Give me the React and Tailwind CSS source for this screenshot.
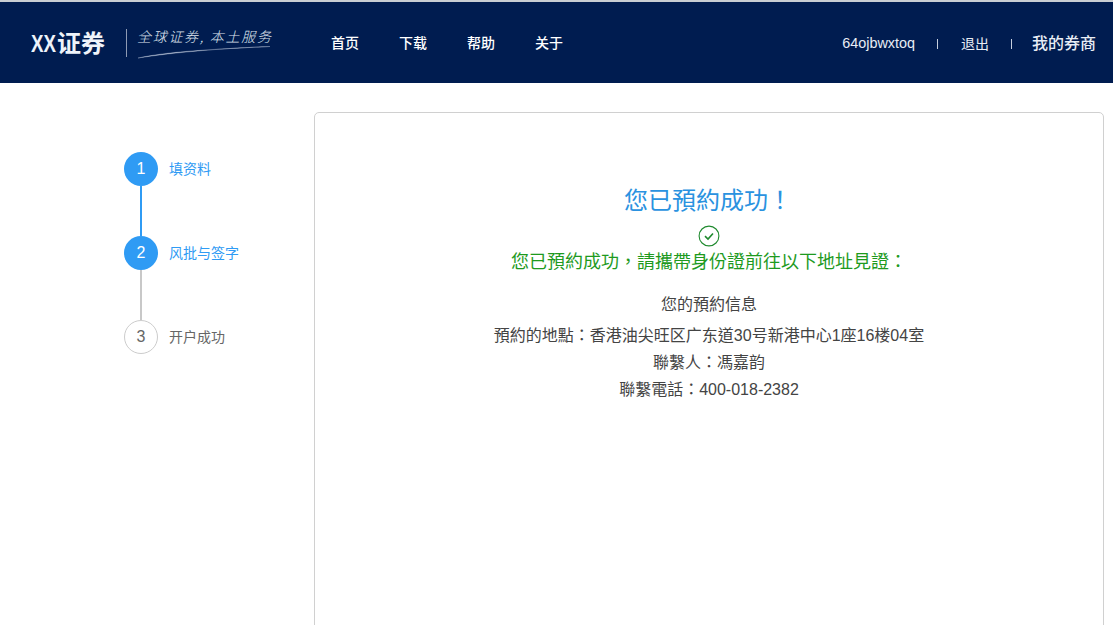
const font = { fontFamily: '"Liberation Sans", "Noto Sans CJK SC", sans-serif' };
const tcFont = { fontFamily: '"Liberation Sans", "Noto Sans CJK TC", sans-serif' };

const navItems = ["首页", "下载", "帮助", "关于"];

const Step = ({ num, label, active, line }) => (
  <div className="flex flex-col">
    <div className="flex items-center h-[34px]">
      <div
        className={
          active
            ? "w-[34px] h-[34px] rounded-full bg-[#2f9bf4] text-white flex items-center justify-center text-base"
            : "w-[34px] h-[34px] rounded-full border border-[#cccccc] bg-white text-[#666666] flex items-center justify-center text-base"
        }
      >
        {num}
      </div>
      <span className={active ? "ml-[11px] text-sm text-[#2f9bf4]" : "ml-[11px] text-sm text-[#666666]"}>
        {label}
      </span>
    </div>
    {line && <div className={line === "blue" ? "w-[2px] h-[50px] ml-[16px] bg-[#2f9bf4]" : "w-[2px] h-[50px] ml-[16px] bg-[#c8c8c8]"} />}
  </div>
);

export default function App() {
  return (
    <div className="w-[1113px] h-[625px] overflow-hidden bg-white" style={font}>
      <header className="h-[83px] bg-[#001c50] border-t-2 border-[#c9cdd3] flex items-center text-white">
        <div className="flex items-center ml-[31px] w-[300px] shrink-0">
          <span className="flex items-center w-[76px] mt-[2px] whitespace-nowrap font-bold leading-none text-[24px] text-[#eef3fa]">
            <span className="inline-block w-[27px] origin-left scale-x-[0.78]">XX</span>
            <span className="-ml-[1px]">证券</span>
          </span>
          <div className="w-px h-[28px] bg-[#8e9ab3] ml-[19px]" />
          <div className="relative ml-[10px] h-[36px] w-[136px]">
            <span
              className="absolute left-0 top-[1px] text-[14px] italic tracking-[1.7px] whitespace-nowrap text-[#dfe5ef]"
              style={{ fontFamily: '"Noto Sans CJK SC", serif', fontWeight: 300 }}
            >
              全球证券, 本土服务
            </span>
            <svg className="absolute left-0 top-[20px]" width="136" height="16" viewBox="0 0 136 16" fill="none">
              <path d="M1 13C30 7 60 5 133 1.5C90 3 40 7 1 13Z" fill="#c9d3e4" stroke="#c9d3e4" strokeWidth="0.3" />
            </svg>
          </div>
        </div>
        <nav className="flex items-center gap-[40px] text-sm font-medium">
          {navItems.map((item) => (
            <span key={item} className="w-[28px] whitespace-nowrap">{item}</span>
          ))}
        </nav>
        <div className="ml-auto mr-[17px] mt-[2px] flex items-center text-[#e8edf5]">
          <span className="text-[14.4px]">64ojbwxtoq</span>
          <div className="w-px h-[10px] bg-[#c6cede] ml-[22px] mr-[23px]" />
          <span className="text-sm">退出</span>
          <div className="w-px h-[10px] bg-[#c6cede] ml-[22px] mr-[20px]" />
          <span className="text-base font-medium">我的券商</span>
        </div>
      </header>

      <main className="flex">
        <aside className="w-[314px] shrink-0 pl-[124px] pt-[69px]">
          <Step num="1" label="填资料" active line="blue" />
          <Step num="2" label="风批与签字" active line="gray" />
          <Step num="3" label="开户成功" />
        </aside>
        <section className="mt-[29px] w-[790px] h-[600px] border border-[#d0d0d0] rounded-[5px] flex flex-col items-center pt-[72px] text-[#444444]" style={tcFont}>
          <h1 className="text-2xl leading-[32px] text-[#2a92e0] ml-[-2px]">您已預約成功！</h1>
          <svg className="mt-[8px] text-[#1f8a2e]" width="22" height="22" viewBox="0 0 22 22" fill="none" stroke="currentColor">
            <circle cx="11" cy="11" r="9.9" strokeWidth="1.1" />
            <path d="M7 11.2L10 14L15 8.5" strokeWidth="1.6" />
          </svg>
          <p className="text-lg leading-[24px] text-[#1e9a1e] mt-[3px]">您已預約成功，請攜帶身份證前往以下地址見證：</p>
          <p className="text-base leading-[27px] mt-[17px]">您的預約信息</p>
          <p className="text-base leading-[27px] mt-[4px]">預約的地點：香港油尖旺区广东道30号新港中心1座16楼04室</p>
          <p className="text-base leading-[27px]">聯繫人：馮嘉韵</p>
          <p className="text-base leading-[27px]">聯繫電話：400-018-2382</p>
        </section>
      </main>
    </div>
  );
}
